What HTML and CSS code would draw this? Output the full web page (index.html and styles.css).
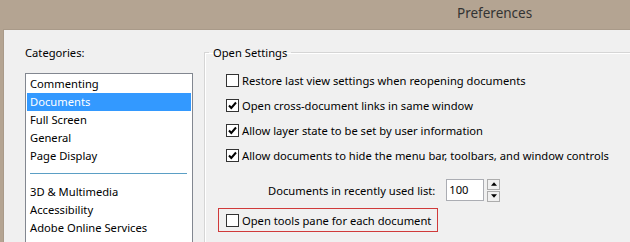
FILE: index.html
```html
<!DOCTYPE html>
<html>
<head>
  <title>Preferences</title>
  <link rel="stylesheet" href="styles.css">
</head>
<body>
  <!-- Title bar -->
  <div class="titlebar">
    <span class="title">Preferences</span>
  </div>

  <div class="window">
    <!-- Categories -->
    <div class="sidebar">
      <div class="side-label">Categories:</div>
      <ul class="cat-list">
        <li>Commenting</li>
        <li class="selected">Documents</li>
        <li>Full Screen</li>
        <li>General</li>
        <li>Page Display</li>
        <li class="sep"></li>
        <li>3D &amp; Multimedia</li>
        <li>Accessibility</li>
        <li>Adobe Online Services</li>
        <li>Email Accounts</li>
      </ul>
    </div>

    <!-- Open Settings group -->
    <fieldset class="group">
      <legend>Open Settings</legend>

      <label class="check-row">
        <span class="box"></span>
        Restore last view settings when reopening documents
      </label>
      <label class="check-row">
        <span class="box"><svg viewBox="0 0 11 11"><path d="M2 5.5 L4.3 8 L9 2.5" /></svg></span>
        Open cross-document links in same window
      </label>
      <label class="check-row">
        <span class="box"><svg viewBox="0 0 11 11"><path d="M2 5.5 L4.3 8 L9 2.5" /></svg></span>
        Allow layer state to be set by user information
      </label>
      <label class="check-row">
        <span class="box"><svg viewBox="0 0 11 11"><path d="M2 5.5 L4.3 8 L9 2.5" /></svg></span>
        Allow documents to hide the menu bar, toolbars, and window controls
      </label>

      <div class="recent-row">
        <span>Documents in recently used list:</span>
        <span class="num-input">100</span>
        <span class="spinner">
          <span class="spin-btn"><svg viewBox="0 0 7 4"><path d="M0 4 L3.5 0 L7 4 Z" /></svg></span>
          <span class="spin-btn"><svg viewBox="0 0 7 4"><path d="M0 0 L3.5 4 L7 0 Z" /></svg></span>
        </span>
      </div>

      <label class="check-row marked">
        <span class="box"></span>
        Open tools pane for each document
      </label>
    </fieldset>
  </div>
</body>
</html>
```

FILE: styles.css
```css
body {
  margin: 0;
  background: #b4a492;
  font-family: "Noto Sans", "Open Sans", sans-serif;
  font-size: 11.2px;
  color: #000;
  height: 242px;
  overflow: hidden;
}

.titlebar {
  height: 29px;
  display: flex;
  align-items: center;
  padding-left: 457px;
}

.title {
  font-size: 13.5px;
  color: #333;
  margin-top: -4px;
}

.window {
  margin-left: 3px;
  height: 213px;
  background: #f0f0f0;
  border-top: 1px solid #a99a89;
  border-left: 1px solid #a99a89;
  display: flex;
  overflow: hidden;
}

/* categories */
.sidebar {
  width: 179px;
  padding-left: 21px;
  flex-shrink: 0;
}

.side-label {
  margin-top: 15px;
  height: 28px;
}

.cat-list {
  list-style: none;
  margin: 0;
  padding: 1px;
  width: 164px;
  height: 200px;
  background: #fff;
  border: 1px solid #828790;
}

.cat-list li {
  height: 18px;
  line-height: 18px;
  padding-left: 3px;
  white-space: nowrap;
}

.cat-list li.selected {
  background: #3399ff;
  color: #fff;
}

.cat-list li.sep {
  height: 1px;
  margin: 8px 4px 9px 3px;
  padding: 0;
  background: #5b9fc5;
}

/* group box */
.group {
  margin: 15px 0 0 0;
  padding: 8px 0 0 21px;
  border: 1px solid #d5d5d5;
  border-right: none;
  border-bottom: none;
  box-shadow: inset 1px 1px 0 #fff;
  flex: 1;
  min-width: 0;
}

.group legend {
  padding: 0 4px;
  margin-left: -17px;
}

.check-row {
  display: flex;
  align-items: center;
  height: 25px;
  white-space: nowrap;
}

.box {
  width: 11px;
  height: 11px;
  border: 1px solid #333;
  background: #fff;
  margin-right: 3px;
  display: flex;
  flex-shrink: 0;
}

.box svg {
  width: 11px;
  height: 11px;
  fill: none;
  stroke: #000;
  stroke-width: 2;
}

.recent-row {
  display: flex;
  align-items: center;
  height: 34px;
  padding-left: 42px;
  margin-top: 5px;
}

.num-input {
  width: 34px;
  height: 20px;
  line-height: 20px;
  margin-left: 11px;
  padding-left: 2px;
  border: 1px solid #abadb3;
  background: #fff;
}

.spinner {
  display: flex;
  flex-direction: column;
  margin-left: 3px;
  gap: 1px;
}

.spin-btn {
  width: 13px;
  height: 11px;
  background: #f0f0f0;
  border: 1px solid #acacac;
  display: flex;
  align-items: center;
  justify-content: center;
  box-sizing: border-box;
}

.spin-btn svg {
  width: 6px;
  height: 4px;
  fill: #000;
}

.marked {
  width: 211px;
  height: 22px;
  margin-left: -8px;
  padding-left: 7px;
  border: 1px solid #d03a3a;
  margin-top: 1px;
}
```
